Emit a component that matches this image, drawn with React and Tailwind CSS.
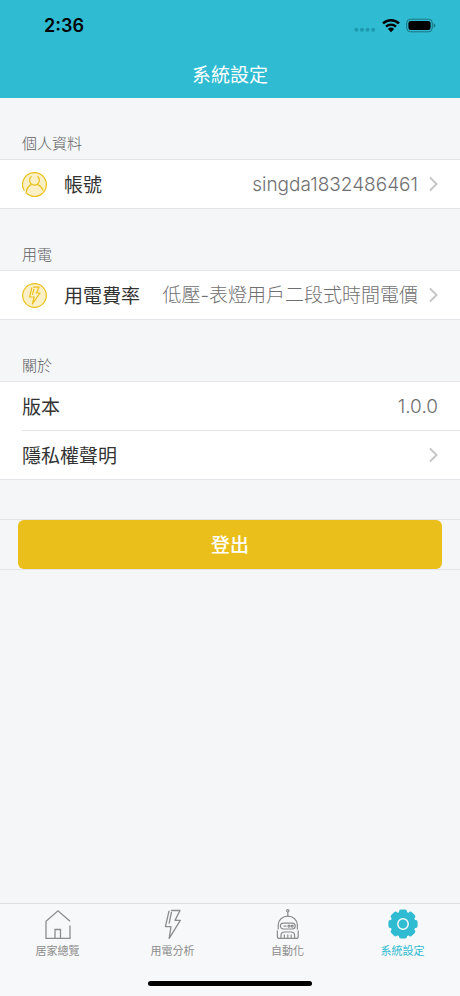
const UserIcon = () => (
  <svg
    className="size-[25px] shrink-0"
    viewBox="0 0 25 25"
    fill="none"
    stroke="#ebc01c"
    strokeWidth="1.2"
    strokeLinecap="round"
    aria-hidden="true"
  >
    <circle cx="12.5" cy="12.5" r="11.9" fill="#fbefc6" stroke="none" />
    <path d="M2 18.2A11.9 11.9 0 1 1 5 21.8M6.5 22.8A11.9 11.9 0 0 0 20 21.8" />
    <path d="M9.2 4.6A4.9 4.9 0 1 0 15.9 4.7" />
    <path d="M4.2 21.2C4.4 17.2 6 14.2 9.2 12.6M16 12.6C18.6 13.8 20.2 15.6 21 18" />
  </svg>
);

const PowerIcon = () => (
  <svg
    className="size-[25px] shrink-0"
    viewBox="0 0 25 25"
    fill="none"
    stroke="#ebc01c"
    strokeWidth="1.2"
    strokeLinecap="round"
    strokeLinejoin="round"
    aria-hidden="true"
  >
    <circle cx="12.5" cy="12.5" r="11.8" fill="#fbefc6" />
    <path d="M11.6 4.2H17L14.4 10H18L10.4 21L12.2 14H7.6L9.8 4.8M11.8 6.4L10.6 11.4" />
  </svg>
);

const ChevronIcon = () => (
  <svg
    className="h-4 w-[9px] shrink-0"
    viewBox="0 0 9 16"
    fill="none"
    stroke="#c4c4c6"
    strokeWidth="1.8"
    aria-hidden="true"
  >
    <path d="M1 1.5L7.6 8L1 14.5" />
  </svg>
);

const HomeIcon = () => (
  <svg
    className="size-8"
    viewBox="0 0 32 32"
    fill="none"
    stroke="currentColor"
    strokeWidth="1.3"
    aria-hidden="true"
  >
    <path d="M28 13.3L16 2.8L4 13.3V30.4H28V17.5" />
    <path d="M13 30V21.5H18.5V30" />
  </svg>
);

const BoltIcon = () => (
  <svg
    className="size-8"
    viewBox="0 0 32 32"
    fill="none"
    stroke="currentColor"
    strokeWidth="1.3"
    strokeLinejoin="round"
    strokeLinecap="round"
    aria-hidden="true"
  >
    <path d="M14.5 2.5H23L18 12.4H23.3L12.2 30.4L14 18.6H8.4L12 3.2" />
    <path d="M14.4 4.5L12.2 15.2" />
  </svg>
);

const RobotIcon = () => (
  <svg
    className="size-8"
    viewBox="0 0 32 32"
    fill="none"
    stroke="currentColor"
    strokeWidth="1.2"
    aria-hidden="true"
  >
    <circle cx="15.8" cy="2.8" r="1.2" />
    <path d="M15.8 4V8.2" />
    <path d="M6.2 21.5V17A9.6 8.8 0 0 1 25.4 17V21.5" />
    <rect x="8.4" y="15.2" width="14.8" height="5.8" rx="2.9" />
    <path d="M11.5 18.1H14.5" />
    <circle cx="17" cy="18.1" r="1" />
    <circle cx="20.2" cy="18.1" r="1" />
    <path d="M5.4 22.5V28.4Q5.4 30.4 7.4 30.4H24.2Q26.2 30.4 26.2 28.4V22.5" />
    <path d="M9 30V27.5Q9 24 12.5 24H19.1Q22.6 24 22.6 27.5V30M12.4 26.5V30M15.8 26.5V30M19.2 26.5V30" />
  </svg>
);

const GearIcon = () => (
  <svg className="size-8" viewBox="0 0 32 32" aria-hidden="true">
    <g fill="currentColor">
      <circle cx="16" cy="16" r="12.6" />
      <rect x="12" y="1.4" width="8" height="29.2" rx="2" />
      <rect x="12" y="1.4" width="8" height="29.2" rx="2" transform="rotate(45 16 16)" />
      <rect x="12" y="1.4" width="8" height="29.2" rx="2" transform="rotate(90 16 16)" />
      <rect x="12" y="1.4" width="8" height="29.2" rx="2" transform="rotate(135 16 16)" />
    </g>
    <circle cx="16" cy="16" r="5.2" fill="none" stroke="#f7f8f9" strokeWidth="1.5" />
  </svg>
);

const StatusBar = () => (
  <div className="flex h-[50px] items-center justify-between pt-[2px] pr-6 pl-11">
    <span className="text-lg font-semibold text-black">2:36</span>
    <div className="flex items-center gap-[6px] text-black">
      <svg className="h-4 w-[22px]" viewBox="0 0 22 16" fill="#1c9aaf" aria-hidden="true">
        <circle cx="2.4" cy="11.8" r="2" />
        <circle cx="8" cy="11.8" r="2" />
        <circle cx="13.6" cy="11.8" r="2" />
        <circle cx="19.2" cy="11.8" r="2" />
      </svg>
      <svg className="h-4 w-[18px]" viewBox="0 0 18 16" aria-hidden="true">
        <path d="M1 5.4A11.6 11.6 0 0 1 17 5.4" fill="none" stroke="currentColor" strokeWidth="2.5" />
        <path d="M4 8.7A7.2 7.2 0 0 1 14 8.7" fill="none" stroke="currentColor" strokeWidth="2.3" />
        <path d="M9 14.2L5.9 11A4.5 4.5 0 0 1 12.1 11Z" fill="currentColor" />
      </svg>
      <svg className="h-4 w-[30px]" viewBox="0 0 30 16" aria-hidden="true">
        <rect x="0.7" y="1.2" width="25.6" height="12.6" rx="3.8" fill="none" stroke="#1b7482" />
        <rect x="2.4" y="2.9" width="22.2" height="9.2" rx="2.4" fill="currentColor" />
        <path d="M27.6 5.3Q29.4 5.9 29.4 7.5Q29.4 9.1 27.6 9.7Z" fill="#1b7482" />
      </svg>
    </div>
  </div>
);

const SectionTitle = ({ children }) => (
  <h2 className="flex h-[61px] items-end px-[22px] pb-[5px] text-[15px] leading-5 font-light text-[#5e5e60]">
    {children}
  </h2>
);

const List = ({ children }) => (
  <div className="border-y border-[#e3e5e8] bg-white">{children}</div>
);

const Label = ({ children }) => (
  <span className="pt-[3px] text-[#333]">{children}</span>
);

const Value = ({ children }) => (
  <span className="ml-auto pt-[2px] font-light text-[#707072]">{children}</span>
);

const LinkRow = ({ icon, label, value }) => (
  <a href="#" className="flex h-12 items-center gap-[11px] px-[22px]">
    <span className="flex items-center gap-[17px]">
      {icon}
      <Label>{label}</Label>
    </span>
    <Value>{value}</Value>
    <ChevronIcon />
  </a>
);

const tabs = [
  { name: "居家總覽", Icon: HomeIcon },
  { name: "用電分析", Icon: BoltIcon },
  { name: "自動化", Icon: RobotIcon },
  { name: "系統設定", Icon: GearIcon, current: true },
];

const TabBar = () => (
  <footer className="border-t border-[#dcdee1] bg-[#f7f8f9]">
    <nav className="grid grid-cols-4">
      {tabs.map(({ name, Icon, current }) => (
        <a
          key={name}
          href="#"
          aria-current={current ? "page" : undefined}
          className={
            current
              ? "flex flex-col items-center gap-[3px] pt-1 text-[#2fbbd1]"
              : "flex flex-col items-center gap-[3px] pt-1 text-[#8c8c8c]"
          }
        >
          <Icon />
          <span className="text-[11px] leading-4">{name}</span>
        </a>
      ))}
    </nav>
    <div className="flex justify-center pt-[22px] pb-[10px]">
      <div className="h-[5px] w-[164px] rounded-full bg-black" />
    </div>
  </footer>
);

const App = () => {
  return (
    <div className="flex min-h-screen flex-col bg-[#f4f6f8] font-['Inter','Noto_Sans_CJK_TC',sans-serif] text-[19px] leading-7">
      <header className="bg-[#2fbbd1]">
        <StatusBar />
        <h1 className="flex h-12 items-center justify-center pt-[3px] text-white">
          系統設定
        </h1>
      </header>
      <main className="flex-1">
        <SectionTitle>個人資料</SectionTitle>
        <List>
          <LinkRow icon={<UserIcon />} label="帳號" value="singda1832486461" />
        </List>
        <SectionTitle>用電</SectionTitle>
        <List>
          <LinkRow
            icon={<PowerIcon />}
            label="用電費率"
            value="低壓-表燈用戶二段式時間電價"
          />
        </List>
        <SectionTitle>關於</SectionTitle>
        <List>
          <div className="flex h-12 items-center px-[22px]">
            <Label>版本</Label>
            <Value>1.0.0</Value>
          </div>
          <div className="ml-[22px] border-t border-[#e3e5e8]" />
          <LinkRow label="隱私權聲明" />
        </List>
        <div className="mt-[39px] border-y border-[#e3e5e8] px-[18px]">
          <button
            type="button"
            className="h-[49px] w-full rounded-md bg-[#eabf1b] pt-[2px] font-medium text-white"
          >
            登出
          </button>
        </div>
      </main>
      <TabBar />
    </div>
  );
};

export default App;
